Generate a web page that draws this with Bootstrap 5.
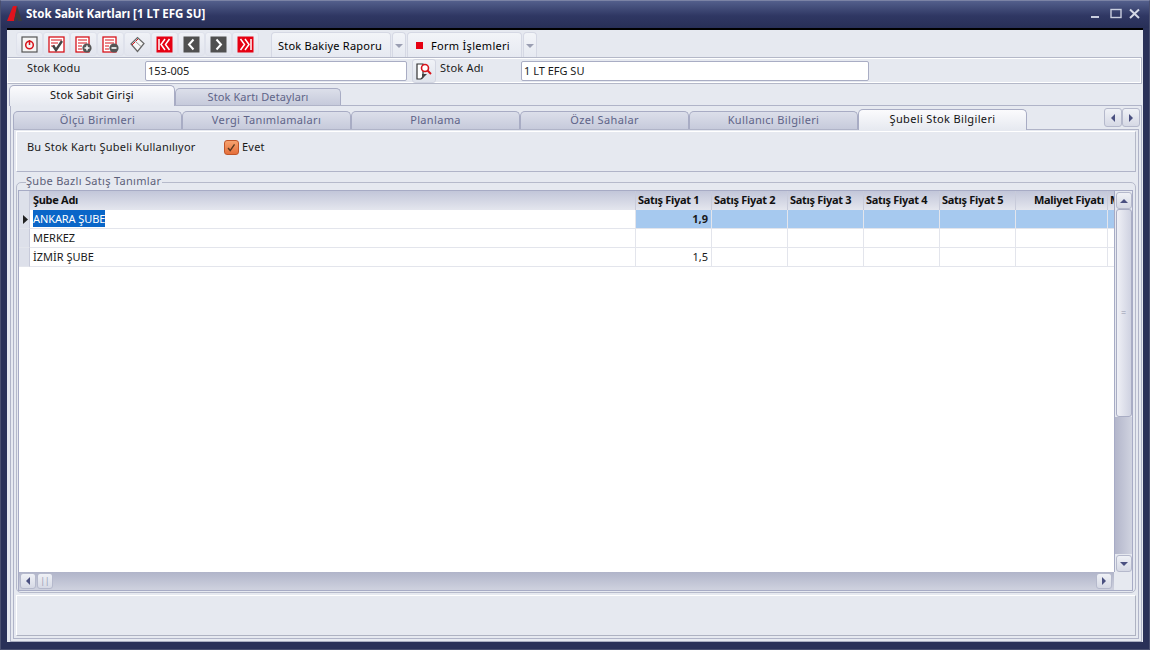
<!DOCTYPE html>
<html lang="tr">
<head>
  <meta charset="UTF-8">
  <title>Stok Sabit Kartları</title>
  <link href="https://cdn.jsdelivr.net/npm/bootstrap@5.3.0/dist/css/bootstrap.min.css" rel="stylesheet">
  <style>
    html, body { margin: 0; height: 650px; overflow: hidden; background: #2a3158; }
    body { font-family: "Noto Sans", "DejaVu Sans", sans-serif; font-size: 11px; color: #1a1a1a; line-height: 1.2; }
    .win { width: 1150px; height: 650px; background: #2a3158; border: 1px solid #4a5070; border-top-color: #7b83a5; }
    .win-title { height: 27px; padding: 0 8px 2px 5px; color: #fff; background: linear-gradient(#535f8c, #2f3763 55%, #282f57); }
    .win-title b { font-size: 11.5px; margin-left: 3px; letter-spacing: 0; }
    .win-ctl { gap: 7px; }
    .win-body { margin: 0 6px 7px; flex: 1; min-height: 0; background: #e6e9f0; border-top: 2px solid #000; }
    .tool-row { height: 27px; padding: 2px 0 0 9px; flex: none; }
    .tool-btn { width: 27px; height: 24px; padding: 0; border: 1px solid #dfe2ec; border-radius: 3px; background: linear-gradient(#f0f2f7, #e2e5ee); }
    .tool-btn svg { display: block; margin: 0 auto; }
    .tool-drop { height: 26px; margin-left: 1px; border: 1px solid #d5d8e4; border-bottom: 0; border-radius: 4px 4px 0 0; background: linear-gradient(#f2f4f8, #e6e9f1); letter-spacing: .23px; padding: 0; }
    .tool-main { width: 120px; margin-left: 12px; padding-right: 2px; }
    .tool-form { width: 115px; letter-spacing: .3px; padding-right: 3px; }
    .tool-caret { width: 14px; color: #8b90a5; }
    .red-dot { width: 7px; height: 7px; background: #e60012; margin-right: 8px; }
    .code-row { height: 27px; flex: none; margin-right: 1px; border: 1px solid #b4b8c8; border-left-color: #fff; border-top-color: #b4b8c8; box-shadow: inset 0 1px #fff, inset -1px 0 #fff, inset 0 -1px #fff; letter-spacing: .1px; position: relative; }
    .code-label { width: 137px; padding: 0 0 6px 19px; }
    .code-input { height: 20px; border: 1px solid #a9adc4; background: #fff; padding: 0 2px; line-height: 18px; letter-spacing: 0; border-radius: 2px; }
    .in-code { width: 262px; }
    .in-name { width: 348px; }
    .look-btn { width: 24px; height: 24px; margin: 0 4px 0 5px; padding: 0; border: 1px solid #d3d6e2; border-radius: 3px; background: linear-gradient(#f0f2f7, #dfe3ec); }
    .look-btn svg { display: block; margin-left: 0; }
    .name-label { width: 81px; padding-bottom: 6px; letter-spacing: .2px; }
    .tabs-a { height: 21px; flex: none; padding-left: 2px; align-items: flex-end; }
    .tab-x { color: #5f6488; letter-spacing: .35px; text-align: center; border: 1px solid #a8acc4; border-bottom: 0; border-radius: 5px 5px 0 0; background: linear-gradient(#dcdfea, #c6cadb); }
    .tab-on { color: #111; background: linear-gradient(#fbfbfd, #e6e9f0); height: 21px; position: relative; z-index: 1; margin-bottom: -1px; }
    .outer-frame { flex: 1; min-height: 0; margin: 0 1px 0 3px; border: 1px solid #b0b4c8; border-bottom-color: #a9adc0; padding: 2px; }
    .tabs-b { height: 21px; flex: none; align-items: flex-end; position: relative; }
    .tabs-b .tab-x { width: 169px; height: 18px; line-height: 16px; }
    .tabs-b .tab-on { height: 21px; line-height: 18px; }
    .tabs-a .tab-x { width: 166px; height: 17px; line-height: 15px; letter-spacing: .1px; }
    .tabs-a .tab-on { height: 21px; line-height: 18px; letter-spacing: .2px; }
    .tab-nav { position: absolute; right: -1px; top: 0; width: 36px; height: 19px; }
    .tab-nav span { flex: 1; border: 1px solid #b5b9cc; border-radius: 3px; background: linear-gradient(#eff1f6, #d6d9e5); }
    .inner-frame { flex: 1; min-height: 0; border: 1px solid #b0b4c8; padding: 1px 2px 2px; }
    .opt-panel { height: 41px; flex: none; border: 1px solid #fff; border-bottom-color: #b0b4c8; border-right-color: #b4b8c8; padding: 8px 0 0 10px; letter-spacing: .22px; }
    .opt-label { width: 197px; }
    .check-box { width: 15px; height: 15px; margin-right: 3px; border: 1px solid #c0562a; border-radius: 3px; background: linear-gradient(#f6a36f, #e56f3b); }
    .group-box { flex: 1; min-height: 0; margin-top: 10px; padding: 7px 2px 1px 1px; border: 1px solid #b6bacb; border-radius: 5px; position: relative; }
    .group-cap { position: absolute; left: 9px; top: -9px; padding-right: 1px; background: #e6e9f0; color: #5c6078; letter-spacing: .3px; }
    .grid-wrap { flex: 1; min-height: 0; border: 1px solid #a7abc5; background: #fff; }
    .grid-main { flex: 1; min-width: 0; min-height: 0; overflow: hidden; }
    .stock-grid { table-layout: fixed; width: 1100px; margin: 0; border-collapse: separate; border-spacing: 0; }
    .stock-grid th, .stock-grid td { height: 19px; padding: 0 3px; border: 0; border-right: 1px solid #e3e5ec; border-bottom: 1px solid #e3e5ec; font-size: 11px; line-height: 18px; white-space: nowrap; overflow: hidden; box-shadow: none; }
    .stock-grid thead th { background: linear-gradient(#c2c6d9, #e4e6ee); font-weight: 700; border-right-color: #c8cbda; border-bottom: 0; color: #111; letter-spacing: -.3px; line-height: 17px; vertical-align: top; padding-left: 2px; }
    .stock-grid thead th.name-head { padding-left: 3px; }
    .stock-grid .ind { width: 11px; padding: 0; background: #dde0ea; border-right: 1px solid #c7cada; }
    .ind-arrow { display: block; margin: 0 0 0 4px; }
    .num { text-align: right; padding-right: 3px !important; }
    .row-sel td { background: #a6c9ef; }
    .row-sel td.cell-name { background: #fff; padding-left: 3px; letter-spacing: -.1px; }
    .sel-text { background: #0a66c8; color: #fff; padding: 1px 0; }
    .bar-v { width: 18px; flex: none; background: #e6e9f0; border-left: 1px solid #a7abc5; }
    .bar-arrow { width: 16px; height: 17px; margin: 1px auto 0; border: 1px solid #b5b9cc; border-radius: 3px; background: linear-gradient(#eff1f6, #d6d9e5); flex: none; }
    .bar-thumb { height: 208px; width: 16px; margin: 0 auto; border: 1px solid #a9adc4; border-radius: 3px; background: linear-gradient(90deg, #eff0f6, #cfd2e1); color: #9296ad; font-size: 9px; flex: none; }
    .bar-track { flex: 1; min-height: 0; background: linear-gradient(90deg, #b3b6cb, #d0d3e0); }
    .bar-h { height: 18px; flex: none; background: linear-gradient(#b0b4c9, #cfd2df); padding: 1px 0 0 1px; }
    .bar-hbtn { width: 16px; height: 16px; margin-right: 1px; border: 1px solid #b5b9cc; border-radius: 3px; background: linear-gradient(#eff1f6, #d6d9e5); color: #9296ad; font-size: 8px; }
    .bar-corner { width: 18px; height: 18px; background: #e6e9f0; margin-left: 1px; margin-top: -1px; }
    .foot-panel { height: 41px; flex: none; margin-top: 2px; border: 1px solid #fff; border-right-color: #aeb2c2; border-bottom-color: #aeb2c2; }
    .glyph-up, .glyph-down, .glyph-left, .glyph-right { width: 0; height: 0; border: 4px solid transparent; }
    .glyph-up { border-top: 0; border-bottom-color: #4a5080; }
    .glyph-down { border-bottom: 0; border-top-color: #4a5080; }
    .glyph-left { border-left: 0; border-right-color: #4a5080; }
    .glyph-right { border-right: 0; border-left-color: #4a5080; }
    .mini-caret { width: 0; height: 0; border: 4px solid transparent; border-bottom: 0; border-top-color: #9a9eb2; }
  </style>
</head>
<body>
  <div class="win d-flex flex-column">
    <!-- title bar -->
    <div class="win-title d-flex align-items-center flex-none">
      <svg width="17" height="17" viewBox="0 0 17 17"><path d="M1 16 7 1h4L8 16z" fill="#e0141c"/><path d="M8 16 11 1l5 15h-4l-1-4-1 4z" fill="#3c3c3c"/></svg>
      <b>Stok Sabit Kartları [1 LT EFG SU]</b>
      <div class="ms-auto win-ctl d-flex align-items-center">
        <svg width="12" height="12" viewBox="0 0 12 12"><rect x="0" y="8" width="8" height="2" fill="#c9cede"/></svg>
        <svg width="12" height="12" viewBox="0 0 12 12"><rect x="1" y="1.5" width="10" height="8" fill="none" stroke="#c9cede" stroke-width="1.4"/></svg>
        <svg width="12" height="12" viewBox="0 0 12 12"><path d="M1 1.500 10 10M10 1.500 1 10" stroke="#d5d9e6" stroke-width="2"/></svg>
      </div>
    </div>

    <div class="win-body d-flex flex-column">
      <!-- toolbar -->
      <div class="tool-row d-flex align-items-start">
        <button class="tool-btn"><svg width="17" height="17" viewBox="0 0 17 17"><rect x="1" y="1" width="15" height="15" fill="#f4f4f4" stroke="#555" stroke-width="1.200"/><circle cx="8.500" cy="9" r="3.800" fill="none" stroke="#d8131b" stroke-width="1.500"/><path d="M8.500 4v5" stroke="#d8131b" stroke-width="1.500"/></svg></button>
        <button class="tool-btn"><svg width="17" height="17" viewBox="0 0 17 17"><rect x="1" y="1" width="15" height="15" fill="#fff" stroke="#d8131b" stroke-width="1.300"/><path d="M3 4h11M3 7h7M3 10h4" stroke="#d8131b"/><path d="M5 9.500 8 14l6-9" fill="none" stroke="#444" stroke-width="2.400"/></svg></button>
        <button class="tool-btn"><svg width="17" height="17" viewBox="0 0 17 17"><rect x="1" y="1" width="13" height="15" fill="#fff" stroke="#d8131b" stroke-width="1.300"/><path d="M3 4h9M3 7h9M3 10h4M3 13h4" stroke="#d8131b"/><circle cx="12" cy="12" r="4.600" fill="#555"/><path d="M9.500 12h5M12 9.500v5" stroke="#fff" stroke-width="1.500"/></svg></button>
        <button class="tool-btn"><svg width="17" height="17" viewBox="0 0 17 17"><rect x="1" y="1" width="13" height="15" fill="#fff" stroke="#d8131b" stroke-width="1.300"/><path d="M3 4h9M3 7h9M3 10h4M3 13h4" stroke="#d8131b"/><circle cx="12" cy="12" r="4.600" fill="#555"/><path d="M9.500 12h5" stroke="#fff" stroke-width="1.600"/></svg></button>
        <button class="tool-btn"><svg width="17" height="17" viewBox="0 0 17 17"><path d="M2 8 8.500 1.500 15 7.500 8.500 15.500z" fill="#f6f6f6" stroke="#666" stroke-width="1.200"/><path d="M3 9 9 3" stroke="#d8131b" stroke-width="1"/><path d="M6 5 12 10.500" stroke="#999"/></svg></button>
        <button class="tool-btn"><svg width="17" height="17" viewBox="0 0 17 17"><rect x=".5" y=".5" width="16" height="16" fill="#e60012"/><path d="M3 3v11" stroke="#fff" stroke-width="1.500"/><path d="M9 3 5 8.500l4 5.500M13.500 3l-4 5.500 4 5.500" fill="none" stroke="#fff" stroke-width="1.500"/></svg></button>
        <button class="tool-btn"><svg width="17" height="17" viewBox="0 0 17 17"><rect x=".5" y=".5" width="16" height="16" fill="#505050"/><path d="M10.500 3.500 6 8.500l4.500 5" fill="none" stroke="#fff" stroke-width="2"/></svg></button>
        <button class="tool-btn"><svg width="17" height="17" viewBox="0 0 17 17"><rect x=".5" y=".5" width="16" height="16" fill="#505050"/><path d="M6.500 3.500 11 8.500l-4.500 5" fill="none" stroke="#fff" stroke-width="2"/></svg></button>
        <button class="tool-btn"><svg width="17" height="17" viewBox="0 0 17 17"><rect x=".5" y=".5" width="16" height="16" fill="#e60012"/><path d="M14 3v11" stroke="#fff" stroke-width="1.500"/><path d="M8 3l4 5.500L8 14M3.500 3l4 5.500-4 5.500" fill="none" stroke="#fff" stroke-width="1.500"/></svg></button>
        <button class="tool-drop tool-main">Stok Bakiye Raporu</button>
        <button class="tool-drop tool-caret d-flex align-items-center justify-content-center"><span class="mini-caret"></span></button>
        <button class="tool-drop tool-form d-flex align-items-center justify-content-center"><span class="red-dot"></span>Form İşlemleri</button>
        <button class="tool-drop tool-caret d-flex align-items-center justify-content-center"><span class="mini-caret"></span></button>
      </div>

      <!-- code row -->
      <div class="code-row d-flex align-items-center">
        <div class="code-label">Stok Kodu</div>
        <div class="code-input in-code">153-005</div>
        <button class="look-btn"><svg width="20" height="20" viewBox="0 0 20 20"><path d="M4 3h6v13l-2 2H4z" fill="#fff" stroke="#333" stroke-width="1.200"/><path d="M9 18l5-5H9z" fill="#444"/><circle cx="12" cy="7" r="3.500" fill="#fff" stroke="#d8131b" stroke-width="1.600"/><path d="M14.500 9.500 18 13" stroke="#d8131b" stroke-width="2"/></svg></button>
        <div class="name-label">Stok Adı</div>
        <div class="code-input in-name">1 LT EFG SU</div>
      </div>

      <!-- first tab strip -->
      <div class="tabs-a d-flex">
        <div class="tab-x tab-on">Stok Sabit Girişi</div>
        <div class="tab-x">Stok Kartı Detayları</div>
      </div>

      <div class="outer-frame d-flex flex-column">
        <!-- second tab strip -->
        <div class="tabs-b d-flex">
          <div class="tab-x">Ölçü Birimleri</div>
          <div class="tab-x">Vergi Tanımlamaları</div>
          <div class="tab-x">Planlama</div>
          <div class="tab-x">Özel Sahalar</div>
          <div class="tab-x">Kullanıcı Bilgileri</div>
          <div class="tab-x tab-on">Şubeli Stok Bilgileri</div>
          <div class="tab-nav d-flex">
            <span class="d-flex align-items-center justify-content-center"><i class="glyph-left"></i></span>
            <span class="d-flex align-items-center justify-content-center"><i class="glyph-right"></i></span>
          </div>
        </div>

        <div class="inner-frame d-flex flex-column">
          <div class="opt-panel d-flex align-items-start">
            <div class="opt-label">Bu Stok Kartı Şubeli Kullanılıyor</div>
            <svg class="check-box" viewBox="0 0 15 15"><path d="M3.500 8 6 11l5-7" fill="none" stroke="#5a3a20" stroke-width="1.600"/></svg>
            <span>Evet</span>
          </div>

          <div class="group-box d-flex flex-column">
            <div class="group-cap">Şube Bazlı Satış Tanımlar</div>
            <div class="grid-wrap d-flex flex-column">
              <div class="d-flex flex-grow-1" style="min-height:0">
                <div class="grid-main">
                  <table class="stock-grid">
                    <colgroup><col style="width:11px"><col style="width:606px"><col style="width:76px"><col style="width:76px"><col style="width:76px"><col style="width:76px"><col style="width:76px"><col style="width:92px"><col style="width:11px"></colgroup>
                    <thead>
                      <tr><th class="ind"></th><th class="name-head">Şube Adı</th><th>Satış Fiyat 1</th><th>Satış Fiyat 2</th><th>Satış Fiyat 3</th><th>Satış Fiyat 4</th><th>Satış Fiyat 5</th><th class="num">Maliyet Fiyatı</th><th>M</th></tr>
                    </thead>
                    <tbody>
                      <tr class="row-sel"><td class="ind"><svg class="ind-arrow" width="6" height="9" viewBox="0 0 6 9"><path d="M0 0l5 4.500L0 9z" fill="#222"/></svg></td><td class="cell-name"><span class="sel-text">ANKARA ŞUBE</span></td><td class="num fw-bold">1,9</td><td></td><td></td><td></td><td></td><td></td><td></td></tr>
                      <tr><td class="ind"></td><td>MERKEZ</td><td></td><td></td><td></td><td></td><td></td><td></td><td></td></tr>
                      <tr><td class="ind"></td><td>İZMİR ŞUBE</td><td class="num">1,5</td><td></td><td></td><td></td><td></td><td></td><td></td></tr>
                    </tbody>
                  </table>
                </div>
                <div class="bar-v d-flex flex-column">
                  <div class="bar-arrow d-flex align-items-center justify-content-center"><i class="glyph-up"></i></div>
                  <div class="bar-thumb d-flex align-items-center justify-content-center">=</div>
                  <div class="bar-track"></div>
                  <div class="bar-arrow d-flex align-items-center justify-content-center"><i class="glyph-down"></i></div>
                </div>
              </div>
              <div class="bar-h d-flex">
                <div class="bar-hbtn d-flex align-items-center justify-content-center"><i class="glyph-left"></i></div>
                <div class="bar-hbtn d-flex align-items-center justify-content-center">||</div>
                <div class="bar-hbtn d-flex align-items-center justify-content-center ms-auto"><i class="glyph-right"></i></div>
                <div class="bar-corner"></div>
              </div>
            </div>
          </div>

          <div class="foot-panel"></div>
        </div>
      </div>
    </div>
  </div>
  <script src="https://cdn.jsdelivr.net/npm/bootstrap@5.3.0/dist/js/bootstrap.bundle.min.js"></script>
</body>
</html>
